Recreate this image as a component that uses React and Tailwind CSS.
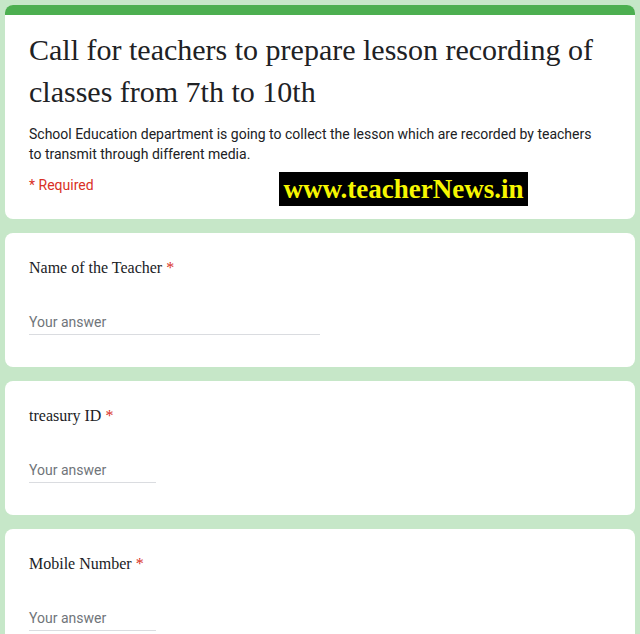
const serif = { fontFamily: '"Liberation Serif", "Times New Roman", serif' };

function Question({ label, lineWidth }) {
  return (
    <section className="rounded-lg bg-white px-6 pt-6 pb-8">
      <div
        className="text-[16px] leading-[22px] text-[#202124]"
        style={serif}
      >
        {label} <span className="text-[#d93025]">*</span>
      </div>
      <div className="mt-[30px] pb-[1px] border-b border-[#dadce0]" style={{ width: lineWidth }}>
        <span className="font-['Roboto',sans-serif] text-[14px] leading-5 text-[#70757a]">
          Your answer
        </span>
      </div>
    </section>
  );
}

export default function App() {
  return (
    <div className="min-h-screen bg-[#c6e7c8] px-[5px] pt-[5px] flex flex-col gap-[14px] overflow-hidden">
      {/* Form header */}
      <section className="relative rounded-lg bg-white overflow-hidden">
        <div className="h-[10px] bg-[#4caf50]" />
        <div className="px-6 pt-[14px] pb-6">
          <h1
            className="text-[30px] leading-[42px] text-[#202124]"
            style={serif}
          >
            Call for teachers to prepare lesson recording of classes from 7th to 10th
          </h1>
          <p className="mt-[11px] font-['Roboto',sans-serif] text-[14px] leading-5 text-[#202124]">
            School Education department is going to collect the lesson which are recorded by teachers
            <br />
            to transmit through different media.
          </p>
          <p className="mt-[11px] font-['Roboto',sans-serif] text-[14px] leading-5 text-[#d93025]">
            * Required
          </p>
        </div>
        {/* watermark */}
        <div className="absolute left-[274px] top-[167px] w-[249px] h-[34px] bg-black flex items-center justify-center">
          <span
            className="text-[27px] font-bold leading-none text-[#f6f600]"
            style={serif}
          >
            www.teacherNews.in
          </span>
        </div>
      </section>

      <Question label="Name of the Teacher" lineWidth={291} />
      <Question label="treasury ID" lineWidth={127} />
      <Question label="Mobile Number" lineWidth={127} />
    </div>
  );
}
